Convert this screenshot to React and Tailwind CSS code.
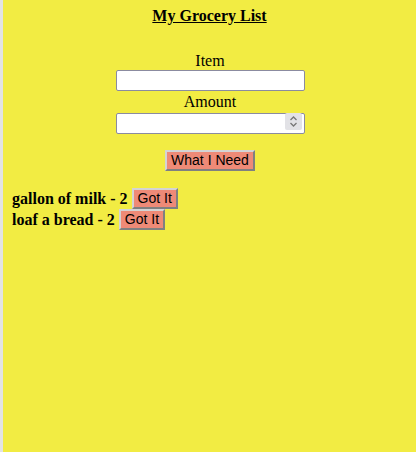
import React, { useState } from 'react';

const btn = 'bg-[#ee8a77] text-black text-[14px] leading-[15px] [font-family:"Liberation_Sans",Arial,sans-serif] border-2 [border-style:outset] border-[#d4d4d4] px-[4px] py-[1px]';

const App = () => {
  const [items, setItems] = useState([
    { name: 'gallon of milk', amount: 2 },
    { name: 'loaf a bread', amount: 2 },
  ]);

  return (
    <div className="min-h-[452px] bg-[#f2ec43] border-l-[3px] border-[#e3e3e3] text-black [font-family:'Liberation_Serif','Times_New_Roman',serif]">
      {/* Title */}
      <h3 className="pt-[7px] text-center text-base leading-[18px] font-bold underline">My Grocery List</h3>

      {/* Form */}
      <div className="mt-[27px] pl-[1px] flex flex-col items-center">
        <label className="text-base leading-[18px]">Item</label>
        <input type="text" className="w-[189px] h-[21px] bg-white border border-[#8b8ba0] rounded-[2px]" />
        <label className="mt-[1px] text-base leading-[19px]">Amount</label>
        <div className="relative">
          <input type="text" className="w-[189px] h-[21px] bg-white border border-[#8b8ba0] rounded-[2px]" />
          <div className="absolute right-[3px] top-[2px] w-[17px] h-[17px] bg-[#e2e2e6] rounded-[2px] flex items-center justify-center">
            <svg width="9" height="13" viewBox="0 0 9 13" fill="none" stroke="#777" strokeWidth="1.3">
              <path d="M1.5 5 L4.5 2 L7.5 5" />
              <path d="M1.5 8 L4.5 11 L7.5 8" />
            </svg>
          </div>
        </div>
        <button className={`mt-[15px] ${btn}`}>What I Need</button>
      </div>

      {/* List */}
      <ul className="mt-[17px] pl-[9px]">
        {items.map((it, i) => (
          <li key={i} className="flex items-center h-[21px] text-base font-bold">
            <span>{it.name} - {it.amount}</span>
            <button
              className={`ml-[4px] font-normal ${btn}`}
              onClick={() => setItems(items.filter((_, j) => j !== i))}
            >
              Got It
            </button>
          </li>
        ))}
      </ul>
    </div>
  );
};

export default App;
